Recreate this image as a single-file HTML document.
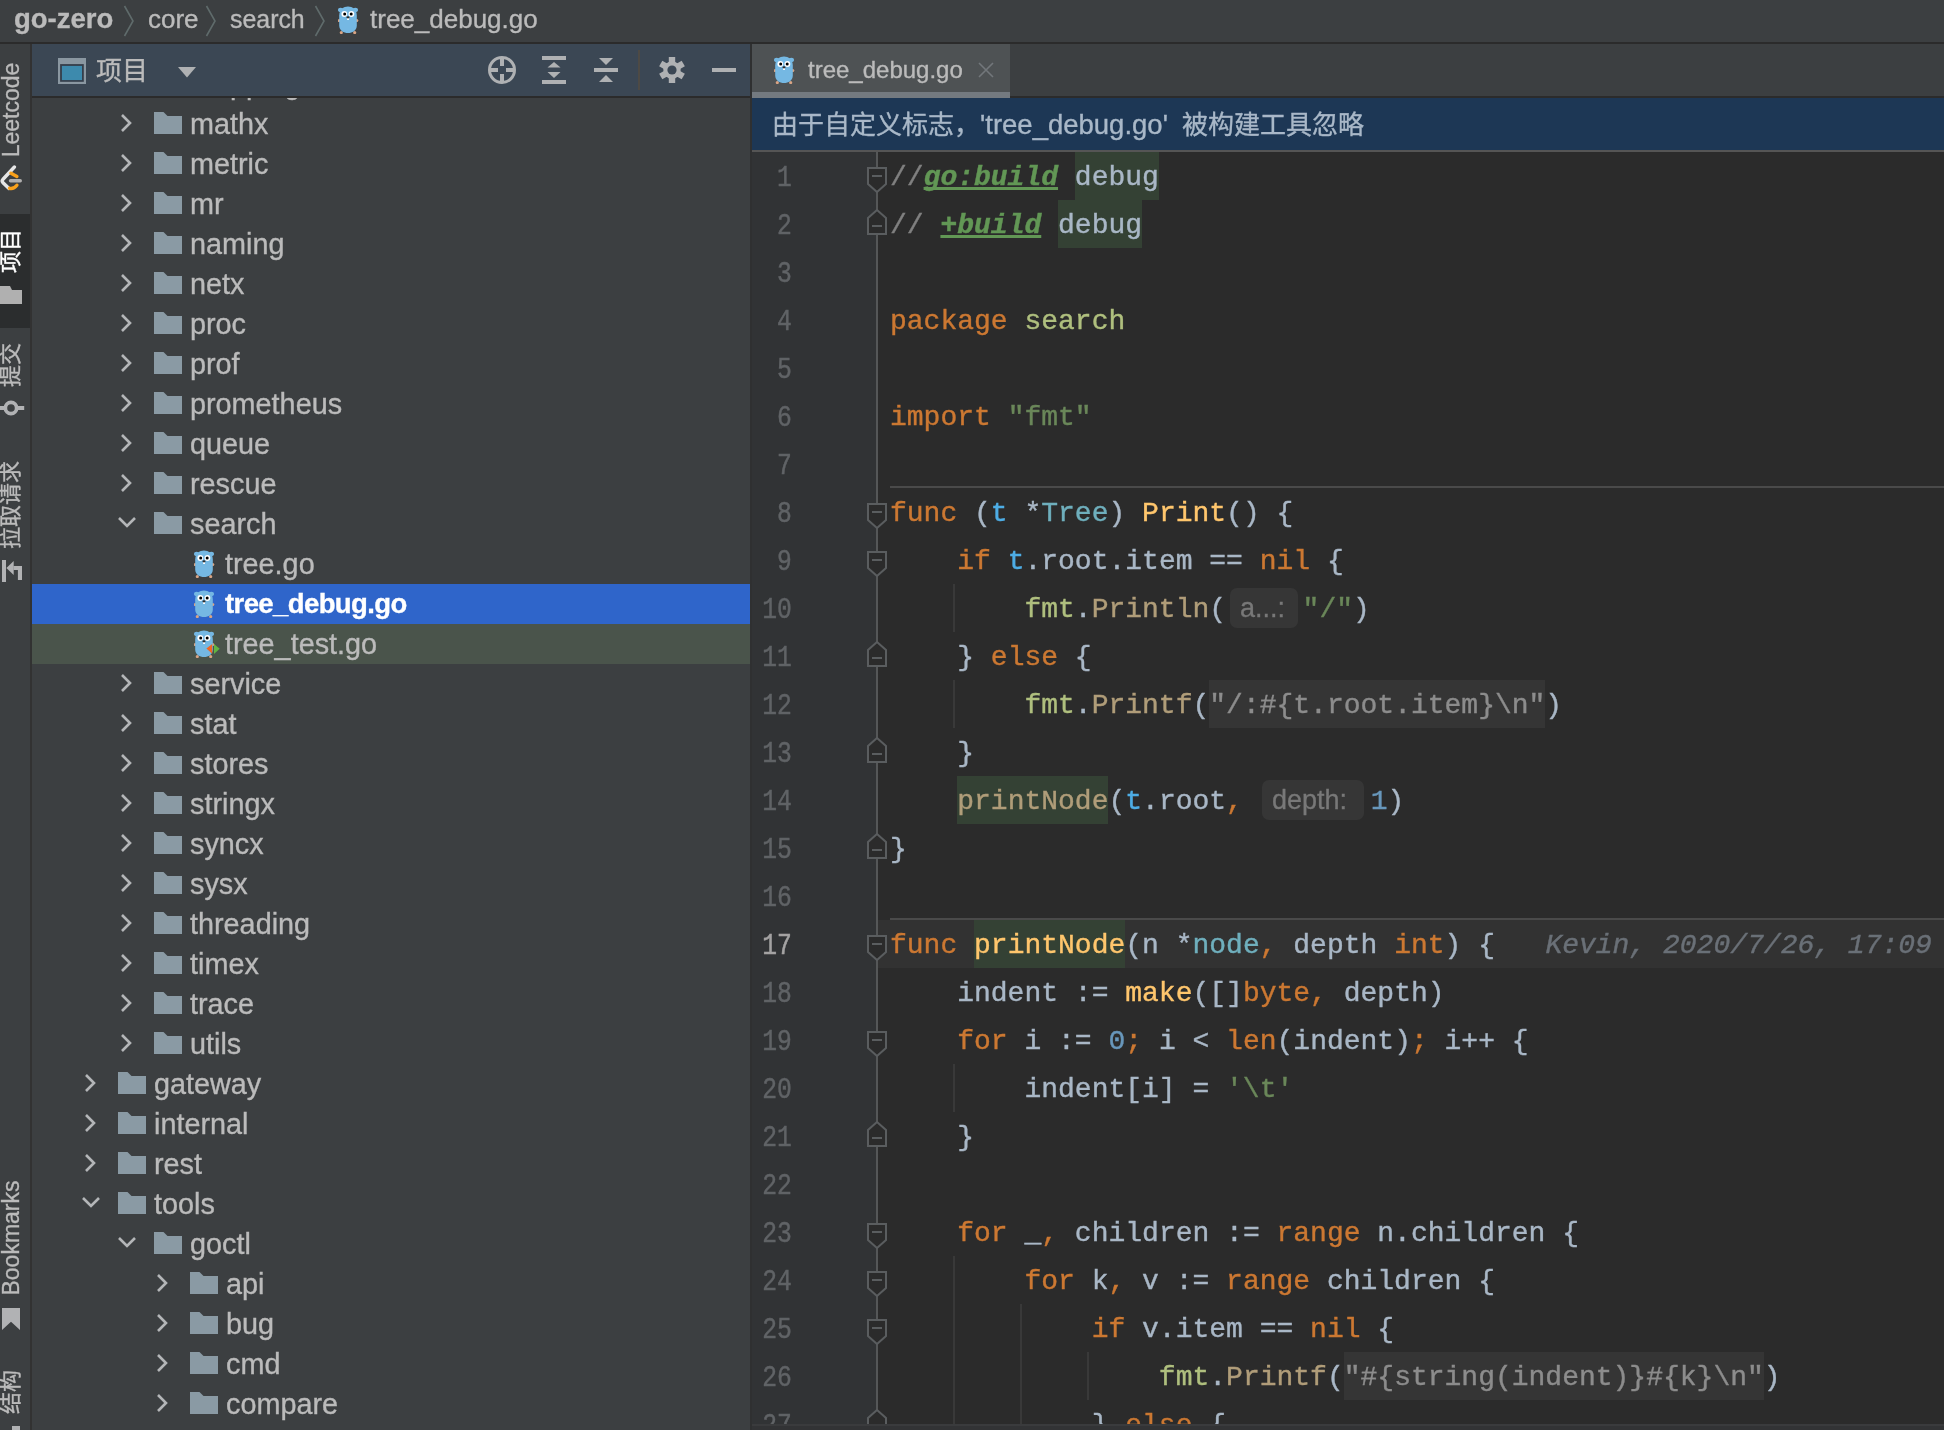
<!DOCTYPE html><html lang="zh-CN"><head><meta charset="utf-8"><style>
*{margin:0;padding:0;box-sizing:border-box}
html,body{width:1944px;height:1430px;overflow:hidden;background:#3C3F41}
#root{position:absolute;left:0;top:0;width:1944px;height:1430px;overflow:hidden;will-change:transform}
body{position:relative;font-family:"Liberation Sans",sans-serif;color:#BBBBBB}
.ic{position:absolute;display:block}
.t{position:absolute;white-space:nowrap}
.bc{position:absolute;left:0;top:0;width:1944px;height:42px;background:#3C3F41;z-index:5}
.bc .t{font-size:26px;line-height:42px;color:#BBBBBB}
.strip{position:absolute;left:0;top:0;width:30px;height:1430px;background:#3C3F41}
.vt{position:absolute;height:30px;line-height:30px;font-size:23px;text-align:center;transform:rotate(-90deg);white-space:nowrap;color:#BBBBBB}
.cjk{font-size:26px}
.vt.cjk{font-size:22px}
.phdr{position:absolute;left:32px;top:44px;width:718px;height:52px;background:#3B4754}
.ptree{position:absolute;left:32px;top:98px;width:718px;height:1332px;background:#3C3F41;overflow:hidden}
.tr{font-size:28.8px;line-height:40px;color:#BBBBBB}
.tabs{position:absolute;left:752px;top:44px;width:1192px;height:52px;background:#3C3F41}
.banner{position:absolute;left:752px;top:98px;width:1192px;height:52px;background:#1D3755;color:#A9B8C8;font-size:26px;line-height:52px;padding-left:20px;padding-top:1px;white-space:nowrap}
.editor{position:absolute;left:752px;top:152px;width:1192px;height:1272px;background:#2B2B2B;overflow:hidden}
.gutter{position:absolute;left:0;top:0;width:125px;height:1272px;background:#313335}
.ln{position:absolute;left:-2px;width:42px;text-align:right;font-family:"Liberation Mono",monospace;font-size:26px;line-height:48px;padding-top:2.5px;transform:scale(0.95,1.15);transform-origin:40px 34px}
.cl{position:absolute;left:138px;height:48px;padding-top:2px;line-height:48px;font-family:"Liberation Mono",monospace;font-size:28px;white-space:pre;color:#A9B7C6}
.tr,.bc .t,.banner,.tabs .t,.vt,.phdr .t{-webkit-text-stroke:0.35px currentColor}
.cl,.ln{-webkit-text-stroke:0.4px currentColor}
.k{color:#CC7832}.s{color:#6A8759}.n{color:#6897BB}.fd{color:#FFC66D}.fc{color:#B09D79}.pk{color:#AFBF7E}
.ty{color:#6FAFBD}.rc{color:#4EADE5}.cm{color:#808080}
.tg{color:#629755;font-weight:bold;font-style:italic;text-decoration:underline;text-underline-offset:2px;text-decoration-thickness:2.5px;text-decoration-skip-ink:none}
.fs{color:#8C8C8C}.bl{color:#6A7077;font-style:italic}
.inl{display:inline-block;height:10px}
.inlb{position:absolute;height:40px;line-height:40px;border-radius:7px;background:#363636;color:#787878;font-family:"Liberation Sans",sans-serif;font-size:27px;text-align:left;-webkit-text-stroke:0.3px currentColor}
</style></head><body><div id="root"><div class="bc"><div class="t b" style="left:14px;top:-2px;font-weight:bold;font-size:27.5px">go-zero</div><svg class="ic" style="left:123px;top:5px" width="12" height="32" viewBox="0 0 12 32"><path d="M1.5 1L10 16L1.5 31" fill="none" stroke="#5F6B6B" stroke-width="1.6"/></svg><div class="t" style="left:148px;top:-2px">core</div><svg class="ic" style="left:205px;top:5px" width="12" height="32" viewBox="0 0 12 32"><path d="M1.5 1L10 16L1.5 31" fill="none" stroke="#5F6B6B" stroke-width="1.6"/></svg><div class="t" style="left:230px;top:-2px;font-size:24.9px">search</div><svg class="ic" style="left:314px;top:5px" width="12" height="32" viewBox="0 0 12 32"><path d="M1.5 1L10 16L1.5 31" fill="none" stroke="#5F6B6B" stroke-width="1.6"/></svg><svg class="ic" style="left:338px;top:6px" width="27" height="28" viewBox="0 0 27 28"><ellipse cx="2.7" cy="3.9" rx="2.7" ry="2.1" fill="#75B8E3"/><ellipse cx="17.3" cy="3.9" rx="2.7" ry="2.1" fill="#75B8E3"/><circle cx="1.2" cy="14.6" r="1.5" fill="#D9A484"/><circle cx="18.8" cy="14.6" r="1.5" fill="#D9A484"/><circle cx="3.3" cy="26.6" r="1.6" fill="#D9A484"/><circle cx="16.7" cy="26.6" r="1.6" fill="#D9A484"/><path d="M1.2 9.5C1.2 -2.5 18.8 -2.5 18.8 9.5V19.5C18.8 29.5 1.2 29.5 1.2 19.5Z" fill="#75B8E3"/><circle cx="6.3" cy="8" r="2.9" fill="#fff"/><circle cx="13.4" cy="8" r="2.9" fill="#fff"/><circle cx="6.7" cy="8" r="1.5" fill="#000"/><circle cx="13.2" cy="8" r="1.5" fill="#000"/><rect x="9.1" y="11.8" width="1.9" height="2.2" fill="#fff"/><ellipse cx="10" cy="11.3" rx="1.6" ry="1.1" fill="#2a2a2a"/></svg><div class="t" style="left:370px;top:-2px">tree_debug.go</div></div><div style="position:absolute;left:0;top:42px;width:1944px;height:2px;background:#2B2B2B;z-index:5"></div><div class="strip"><div class="vt" style="left:-39.0px;top:94.5px;width:100px">Leetcode</div><svg class="ic" style="left:0;top:160px" width="26" height="34" viewBox="0 0 26 34"><path d="M14.4 7L2.8 19.5Q1.5 21 2.8 22.5L9 28.4" fill="none" stroke="#E6E6E6" stroke-width="3.4" stroke-linecap="round"/><path d="M11 13.2L16.9 16.5" fill="none" stroke="#F9A11B" stroke-width="3.4" stroke-linecap="round"/><path d="M9.5 28.3Q13.5 29.5 16.9 25.2" fill="none" stroke="#F9A11B" stroke-width="3.4" stroke-linecap="round"/><path d="M10.5 20.8H20.3" stroke="#B0AFAE" stroke-width="3.4" stroke-linecap="round"/></svg><div style="position:absolute;left:0;top:214px;width:30px;height:114px;background:#2B2D2E"></div><div class="vt cjk" style="left:-19.0px;top:235.9px;width:60px;color:#fff">项目</div><svg class="ic" style="left:0;top:286px" width="22" height="18" viewBox="0 0 22 18"><path d="M0 0H10L12 4H22V18H0Z" fill="#B0B0B0"/></svg><div class="vt cjk" style="left:-19.0px;top:349.5px;width:60px">提交</div><svg class="ic" style="left:0;top:396px" width="26" height="24" viewBox="0 0 26 24"><circle cx="11" cy="12" r="5.65" fill="none" stroke="#B1B2B4" stroke-width="3.7"/><path d="M0 12H4M18 12H24.2" stroke="#B1B2B4" stroke-width="4"/></svg><div class="vt cjk" style="left:-39.0px;top:490.1px;width:100px">拉取请求</div><svg class="ic" style="left:0;top:556px" width="24" height="26" viewBox="0 0 24 26"><rect x="2" y="4" width="4" height="22" fill="#B1B2B4"/><path d="M6.4 12L13.7 5V19Z" fill="#B1B2B4"/><rect x="13.5" y="10" width="8.5" height="4" fill="#B1B2B4"/><rect x="17.9" y="10" width="4.1" height="14" fill="#B1B2B4"/></svg><div class="vt" style="left:-54.0px;top:1223.0px;width:130px">Bookmarks</div><svg class="ic" style="left:0;top:1308px" width="22" height="22" viewBox="0 0 22 22"><path d="M2 0H20V22L11 13.8L2 22Z" fill="#B1B2B4"/></svg><div class="vt cjk" style="left:-19.0px;top:1377.4px;width:60px">结构</div><div style="position:absolute;left:12px;top:1426px;width:8px;height:4px;background:#B1B2B4"></div><div style="position:absolute;left:30px;top:44px;width:2px;height:1386px;background:#323232"></div></div><div class="phdr"><svg class="ic" style="left:26px;top:14px" width="28" height="26" viewBox="0 0 28 26"><rect x="0" y="0" width="28" height="26" fill="#8A97A1"/><rect x="2.1" y="6.1" width="23.7" height="17.7" fill="#353E4A"/><rect x="3.9" y="7.9" width="20.1" height="14.2" fill="#3D8AAD"/></svg><div class="t cjk" style="left:64px;top:1px;line-height:52px;font-size:26px;color:#BBBBBB">项目</div><svg class="ic" style="left:146px;top:23px" width="18" height="11" viewBox="0 0 18 11"><path d="M0 0H18L9 10.5Z" fill="#AFB1B3"/></svg><svg class="ic" style="left:454px;top:10px" width="32" height="32" viewBox="0 0 32 32"><circle cx="16" cy="16" r="12.5" fill="none" stroke="#AFB1B3" stroke-width="3"/><path d="M16 3V12M16 20V29M3 16H12M20 16H29" stroke="#AFB1B3" stroke-width="4"/></svg><svg class="ic" style="left:510px;top:12px" width="24" height="28" viewBox="0 0 24 28"><rect x="0" y="0" width="24" height="4" fill="#AFB1B3"/><rect x="0" y="24" width="24" height="4" fill="#AFB1B3"/><path d="M5.5 11.5H18.5L12 6Z" fill="#AFB1B3"/><path d="M5.5 16H18.5L12 22Z" fill="#AFB1B3"/></svg><svg class="ic" style="left:562px;top:14px" width="24" height="25" viewBox="0 0 24 25"><rect x="0" y="10" width="24" height="4" fill="#AFB1B3"/><path d="M5 0H19L12 7Z" fill="#AFB1B3"/><path d="M5 24H19L12 17Z" fill="#AFB1B3"/></svg><div style="position:absolute;left:606px;top:6px;width:2px;height:40px;background:#4D4A45"></div><svg class="ic" style="left:626px;top:12px" width="28" height="28" viewBox="-14 -14 28 28"><rect x="-3.2" y="-13" width="6.4" height="8" transform="rotate(0)" fill="#AFB1B3"/><rect x="-3.2" y="-13" width="6.4" height="8" transform="rotate(60)" fill="#AFB1B3"/><rect x="-3.2" y="-13" width="6.4" height="8" transform="rotate(120)" fill="#AFB1B3"/><rect x="-3.2" y="-13" width="6.4" height="8" transform="rotate(180)" fill="#AFB1B3"/><rect x="-3.2" y="-13" width="6.4" height="8" transform="rotate(240)" fill="#AFB1B3"/><rect x="-3.2" y="-13" width="6.4" height="8" transform="rotate(300)" fill="#AFB1B3"/><circle r="8.7" fill="#AFB1B3"/><circle r="4.6" fill="#3B4754"/></svg><div style="position:absolute;left:680px;top:24px;width:24px;height:4px;background:#AFB1B3"></div></div><div class="ptree"><svg class="ic" style="left:87px;top:-26px" width="14" height="22" viewBox="0 0 14 22"><path d="M3 3L11 11L3 19" fill="none" stroke="#B4B6B8" stroke-width="2.6"/></svg><svg class="ic" style="left:122px;top:-26px" width="28" height="22" viewBox="0 0 28 22"><path d="M0 0H9.5L13.5 4H28V22H0Z" fill="#8A9AA4"/></svg><div class="t tr" style="left:158px;top:-34px">mapping</div><svg class="ic" style="left:87px;top:14px" width="14" height="22" viewBox="0 0 14 22"><path d="M3 3L11 11L3 19" fill="none" stroke="#B4B6B8" stroke-width="2.6"/></svg><svg class="ic" style="left:122px;top:14px" width="28" height="22" viewBox="0 0 28 22"><path d="M0 0H9.5L13.5 4H28V22H0Z" fill="#8A9AA4"/></svg><div class="t tr" style="left:158px;top:6px">mathx</div><svg class="ic" style="left:87px;top:54px" width="14" height="22" viewBox="0 0 14 22"><path d="M3 3L11 11L3 19" fill="none" stroke="#B4B6B8" stroke-width="2.6"/></svg><svg class="ic" style="left:122px;top:54px" width="28" height="22" viewBox="0 0 28 22"><path d="M0 0H9.5L13.5 4H28V22H0Z" fill="#8A9AA4"/></svg><div class="t tr" style="left:158px;top:46px">metric</div><svg class="ic" style="left:87px;top:94px" width="14" height="22" viewBox="0 0 14 22"><path d="M3 3L11 11L3 19" fill="none" stroke="#B4B6B8" stroke-width="2.6"/></svg><svg class="ic" style="left:122px;top:94px" width="28" height="22" viewBox="0 0 28 22"><path d="M0 0H9.5L13.5 4H28V22H0Z" fill="#8A9AA4"/></svg><div class="t tr" style="left:158px;top:86px">mr</div><svg class="ic" style="left:87px;top:134px" width="14" height="22" viewBox="0 0 14 22"><path d="M3 3L11 11L3 19" fill="none" stroke="#B4B6B8" stroke-width="2.6"/></svg><svg class="ic" style="left:122px;top:134px" width="28" height="22" viewBox="0 0 28 22"><path d="M0 0H9.5L13.5 4H28V22H0Z" fill="#8A9AA4"/></svg><div class="t tr" style="left:158px;top:126px">naming</div><svg class="ic" style="left:87px;top:174px" width="14" height="22" viewBox="0 0 14 22"><path d="M3 3L11 11L3 19" fill="none" stroke="#B4B6B8" stroke-width="2.6"/></svg><svg class="ic" style="left:122px;top:174px" width="28" height="22" viewBox="0 0 28 22"><path d="M0 0H9.5L13.5 4H28V22H0Z" fill="#8A9AA4"/></svg><div class="t tr" style="left:158px;top:166px">netx</div><svg class="ic" style="left:87px;top:214px" width="14" height="22" viewBox="0 0 14 22"><path d="M3 3L11 11L3 19" fill="none" stroke="#B4B6B8" stroke-width="2.6"/></svg><svg class="ic" style="left:122px;top:214px" width="28" height="22" viewBox="0 0 28 22"><path d="M0 0H9.5L13.5 4H28V22H0Z" fill="#8A9AA4"/></svg><div class="t tr" style="left:158px;top:206px">proc</div><svg class="ic" style="left:87px;top:254px" width="14" height="22" viewBox="0 0 14 22"><path d="M3 3L11 11L3 19" fill="none" stroke="#B4B6B8" stroke-width="2.6"/></svg><svg class="ic" style="left:122px;top:254px" width="28" height="22" viewBox="0 0 28 22"><path d="M0 0H9.5L13.5 4H28V22H0Z" fill="#8A9AA4"/></svg><div class="t tr" style="left:158px;top:246px">prof</div><svg class="ic" style="left:87px;top:294px" width="14" height="22" viewBox="0 0 14 22"><path d="M3 3L11 11L3 19" fill="none" stroke="#B4B6B8" stroke-width="2.6"/></svg><svg class="ic" style="left:122px;top:294px" width="28" height="22" viewBox="0 0 28 22"><path d="M0 0H9.5L13.5 4H28V22H0Z" fill="#8A9AA4"/></svg><div class="t tr" style="left:158px;top:286px">prometheus</div><svg class="ic" style="left:87px;top:334px" width="14" height="22" viewBox="0 0 14 22"><path d="M3 3L11 11L3 19" fill="none" stroke="#B4B6B8" stroke-width="2.6"/></svg><svg class="ic" style="left:122px;top:334px" width="28" height="22" viewBox="0 0 28 22"><path d="M0 0H9.5L13.5 4H28V22H0Z" fill="#8A9AA4"/></svg><div class="t tr" style="left:158px;top:326px">queue</div><svg class="ic" style="left:87px;top:374px" width="14" height="22" viewBox="0 0 14 22"><path d="M3 3L11 11L3 19" fill="none" stroke="#B4B6B8" stroke-width="2.6"/></svg><svg class="ic" style="left:122px;top:374px" width="28" height="22" viewBox="0 0 28 22"><path d="M0 0H9.5L13.5 4H28V22H0Z" fill="#8A9AA4"/></svg><div class="t tr" style="left:158px;top:366px">rescue</div><svg class="ic" style="left:84px;top:417px" width="22" height="14" viewBox="0 0 22 14"><path d="M3 3L11 11L19 3" fill="none" stroke="#B4B6B8" stroke-width="2.6"/></svg><svg class="ic" style="left:122px;top:414px" width="28" height="22" viewBox="0 0 28 22"><path d="M0 0H9.5L13.5 4H28V22H0Z" fill="#8A9AA4"/></svg><div class="t tr" style="left:158px;top:406px">search</div><svg class="ic" style="left:162px;top:452px" width="27" height="28" viewBox="0 0 27 28"><ellipse cx="2.7" cy="3.9" rx="2.7" ry="2.1" fill="#75B8E3"/><ellipse cx="17.3" cy="3.9" rx="2.7" ry="2.1" fill="#75B8E3"/><circle cx="1.2" cy="14.6" r="1.5" fill="#D9A484"/><circle cx="18.8" cy="14.6" r="1.5" fill="#D9A484"/><circle cx="3.3" cy="26.6" r="1.6" fill="#D9A484"/><circle cx="16.7" cy="26.6" r="1.6" fill="#D9A484"/><path d="M1.2 9.5C1.2 -2.5 18.8 -2.5 18.8 9.5V19.5C18.8 29.5 1.2 29.5 1.2 19.5Z" fill="#75B8E3"/><circle cx="6.3" cy="8" r="2.9" fill="#fff"/><circle cx="13.4" cy="8" r="2.9" fill="#fff"/><circle cx="6.7" cy="8" r="1.5" fill="#000"/><circle cx="13.2" cy="8" r="1.5" fill="#000"/><rect x="9.1" y="11.8" width="1.9" height="2.2" fill="#fff"/><ellipse cx="10" cy="11.3" rx="1.6" ry="1.1" fill="#2a2a2a"/></svg><div class="t tr" style="left:193px;top:446px">tree.go</div><div style="position:absolute;left:0;top:486px;width:718px;height:40px;background:#2F65CA"></div><svg class="ic" style="left:162px;top:492px" width="27" height="28" viewBox="0 0 27 28"><ellipse cx="2.7" cy="3.9" rx="2.7" ry="2.1" fill="#75B8E3"/><ellipse cx="17.3" cy="3.9" rx="2.7" ry="2.1" fill="#75B8E3"/><circle cx="1.2" cy="14.6" r="1.5" fill="#D9A484"/><circle cx="18.8" cy="14.6" r="1.5" fill="#D9A484"/><circle cx="3.3" cy="26.6" r="1.6" fill="#D9A484"/><circle cx="16.7" cy="26.6" r="1.6" fill="#D9A484"/><path d="M1.2 9.5C1.2 -2.5 18.8 -2.5 18.8 9.5V19.5C18.8 29.5 1.2 29.5 1.2 19.5Z" fill="#75B8E3"/><circle cx="6.3" cy="8" r="2.9" fill="#fff"/><circle cx="13.4" cy="8" r="2.9" fill="#fff"/><circle cx="6.7" cy="8" r="1.5" fill="#000"/><circle cx="13.2" cy="8" r="1.5" fill="#000"/><rect x="9.1" y="11.8" width="1.9" height="2.2" fill="#fff"/><ellipse cx="10" cy="11.3" rx="1.6" ry="1.1" fill="#2a2a2a"/></svg><div class="t tr" style="left:193px;top:486px;color:#FFFFFF;font-weight:bold;font-size:27.5px;letter-spacing:-0.6px">tree_debug.go</div><div style="position:absolute;left:0;top:526px;width:718px;height:40px;background:#4A544B"></div><svg class="ic" style="left:162px;top:532px" width="27" height="28" viewBox="0 0 27 28"><ellipse cx="2.7" cy="3.9" rx="2.7" ry="2.1" fill="#75B8E3"/><ellipse cx="17.3" cy="3.9" rx="2.7" ry="2.1" fill="#75B8E3"/><circle cx="1.2" cy="14.6" r="1.5" fill="#D9A484"/><circle cx="18.8" cy="14.6" r="1.5" fill="#D9A484"/><circle cx="3.3" cy="26.6" r="1.6" fill="#D9A484"/><circle cx="16.7" cy="26.6" r="1.6" fill="#D9A484"/><path d="M1.2 9.5C1.2 -2.5 18.8 -2.5 18.8 9.5V19.5C18.8 29.5 1.2 29.5 1.2 19.5Z" fill="#75B8E3"/><circle cx="6.3" cy="8" r="2.9" fill="#fff"/><circle cx="13.4" cy="8" r="2.9" fill="#fff"/><circle cx="6.7" cy="8" r="1.5" fill="#000"/><circle cx="13.2" cy="8" r="1.5" fill="#000"/><rect x="9.1" y="11.8" width="1.9" height="2.2" fill="#fff"/><ellipse cx="10" cy="11.3" rx="1.6" ry="1.1" fill="#2a2a2a"/><path d="M12.4 18.6L18.2 14.1V23.8Z" fill="#F26522"/><path d="M20 13.9V24L25.7 18.8Z" fill="#62B543"/></svg><div class="t tr" style="left:193px;top:526px">tree_test.go</div><svg class="ic" style="left:87px;top:574px" width="14" height="22" viewBox="0 0 14 22"><path d="M3 3L11 11L3 19" fill="none" stroke="#B4B6B8" stroke-width="2.6"/></svg><svg class="ic" style="left:122px;top:574px" width="28" height="22" viewBox="0 0 28 22"><path d="M0 0H9.5L13.5 4H28V22H0Z" fill="#8A9AA4"/></svg><div class="t tr" style="left:158px;top:566px">service</div><svg class="ic" style="left:87px;top:614px" width="14" height="22" viewBox="0 0 14 22"><path d="M3 3L11 11L3 19" fill="none" stroke="#B4B6B8" stroke-width="2.6"/></svg><svg class="ic" style="left:122px;top:614px" width="28" height="22" viewBox="0 0 28 22"><path d="M0 0H9.5L13.5 4H28V22H0Z" fill="#8A9AA4"/></svg><div class="t tr" style="left:158px;top:606px">stat</div><svg class="ic" style="left:87px;top:654px" width="14" height="22" viewBox="0 0 14 22"><path d="M3 3L11 11L3 19" fill="none" stroke="#B4B6B8" stroke-width="2.6"/></svg><svg class="ic" style="left:122px;top:654px" width="28" height="22" viewBox="0 0 28 22"><path d="M0 0H9.5L13.5 4H28V22H0Z" fill="#8A9AA4"/></svg><div class="t tr" style="left:158px;top:646px">stores</div><svg class="ic" style="left:87px;top:694px" width="14" height="22" viewBox="0 0 14 22"><path d="M3 3L11 11L3 19" fill="none" stroke="#B4B6B8" stroke-width="2.6"/></svg><svg class="ic" style="left:122px;top:694px" width="28" height="22" viewBox="0 0 28 22"><path d="M0 0H9.5L13.5 4H28V22H0Z" fill="#8A9AA4"/></svg><div class="t tr" style="left:158px;top:686px">stringx</div><svg class="ic" style="left:87px;top:734px" width="14" height="22" viewBox="0 0 14 22"><path d="M3 3L11 11L3 19" fill="none" stroke="#B4B6B8" stroke-width="2.6"/></svg><svg class="ic" style="left:122px;top:734px" width="28" height="22" viewBox="0 0 28 22"><path d="M0 0H9.5L13.5 4H28V22H0Z" fill="#8A9AA4"/></svg><div class="t tr" style="left:158px;top:726px">syncx</div><svg class="ic" style="left:87px;top:774px" width="14" height="22" viewBox="0 0 14 22"><path d="M3 3L11 11L3 19" fill="none" stroke="#B4B6B8" stroke-width="2.6"/></svg><svg class="ic" style="left:122px;top:774px" width="28" height="22" viewBox="0 0 28 22"><path d="M0 0H9.5L13.5 4H28V22H0Z" fill="#8A9AA4"/></svg><div class="t tr" style="left:158px;top:766px">sysx</div><svg class="ic" style="left:87px;top:814px" width="14" height="22" viewBox="0 0 14 22"><path d="M3 3L11 11L3 19" fill="none" stroke="#B4B6B8" stroke-width="2.6"/></svg><svg class="ic" style="left:122px;top:814px" width="28" height="22" viewBox="0 0 28 22"><path d="M0 0H9.5L13.5 4H28V22H0Z" fill="#8A9AA4"/></svg><div class="t tr" style="left:158px;top:806px">threading</div><svg class="ic" style="left:87px;top:854px" width="14" height="22" viewBox="0 0 14 22"><path d="M3 3L11 11L3 19" fill="none" stroke="#B4B6B8" stroke-width="2.6"/></svg><svg class="ic" style="left:122px;top:854px" width="28" height="22" viewBox="0 0 28 22"><path d="M0 0H9.5L13.5 4H28V22H0Z" fill="#8A9AA4"/></svg><div class="t tr" style="left:158px;top:846px">timex</div><svg class="ic" style="left:87px;top:894px" width="14" height="22" viewBox="0 0 14 22"><path d="M3 3L11 11L3 19" fill="none" stroke="#B4B6B8" stroke-width="2.6"/></svg><svg class="ic" style="left:122px;top:894px" width="28" height="22" viewBox="0 0 28 22"><path d="M0 0H9.5L13.5 4H28V22H0Z" fill="#8A9AA4"/></svg><div class="t tr" style="left:158px;top:886px">trace</div><svg class="ic" style="left:87px;top:934px" width="14" height="22" viewBox="0 0 14 22"><path d="M3 3L11 11L3 19" fill="none" stroke="#B4B6B8" stroke-width="2.6"/></svg><svg class="ic" style="left:122px;top:934px" width="28" height="22" viewBox="0 0 28 22"><path d="M0 0H9.5L13.5 4H28V22H0Z" fill="#8A9AA4"/></svg><div class="t tr" style="left:158px;top:926px">utils</div><svg class="ic" style="left:51px;top:974px" width="14" height="22" viewBox="0 0 14 22"><path d="M3 3L11 11L3 19" fill="none" stroke="#B4B6B8" stroke-width="2.6"/></svg><svg class="ic" style="left:86px;top:974px" width="28" height="22" viewBox="0 0 28 22"><path d="M0 0H9.5L13.5 4H28V22H0Z" fill="#8A9AA4"/></svg><div class="t tr" style="left:122px;top:966px">gateway</div><svg class="ic" style="left:51px;top:1014px" width="14" height="22" viewBox="0 0 14 22"><path d="M3 3L11 11L3 19" fill="none" stroke="#B4B6B8" stroke-width="2.6"/></svg><svg class="ic" style="left:86px;top:1014px" width="28" height="22" viewBox="0 0 28 22"><path d="M0 0H9.5L13.5 4H28V22H0Z" fill="#8A9AA4"/></svg><div class="t tr" style="left:122px;top:1006px">internal</div><svg class="ic" style="left:51px;top:1054px" width="14" height="22" viewBox="0 0 14 22"><path d="M3 3L11 11L3 19" fill="none" stroke="#B4B6B8" stroke-width="2.6"/></svg><svg class="ic" style="left:86px;top:1054px" width="28" height="22" viewBox="0 0 28 22"><path d="M0 0H9.5L13.5 4H28V22H0Z" fill="#8A9AA4"/></svg><div class="t tr" style="left:122px;top:1046px">rest</div><svg class="ic" style="left:48px;top:1097px" width="22" height="14" viewBox="0 0 22 14"><path d="M3 3L11 11L19 3" fill="none" stroke="#B4B6B8" stroke-width="2.6"/></svg><svg class="ic" style="left:86px;top:1094px" width="28" height="22" viewBox="0 0 28 22"><path d="M0 0H9.5L13.5 4H28V22H0Z" fill="#8A9AA4"/></svg><div class="t tr" style="left:122px;top:1086px">tools</div><svg class="ic" style="left:84px;top:1137px" width="22" height="14" viewBox="0 0 22 14"><path d="M3 3L11 11L19 3" fill="none" stroke="#B4B6B8" stroke-width="2.6"/></svg><svg class="ic" style="left:122px;top:1134px" width="28" height="22" viewBox="0 0 28 22"><path d="M0 0H9.5L13.5 4H28V22H0Z" fill="#8A9AA4"/></svg><div class="t tr" style="left:158px;top:1126px">goctl</div><svg class="ic" style="left:123px;top:1174px" width="14" height="22" viewBox="0 0 14 22"><path d="M3 3L11 11L3 19" fill="none" stroke="#B4B6B8" stroke-width="2.6"/></svg><svg class="ic" style="left:158px;top:1174px" width="28" height="22" viewBox="0 0 28 22"><path d="M0 0H9.5L13.5 4H28V22H0Z" fill="#8A9AA4"/></svg><div class="t tr" style="left:194px;top:1166px">api</div><svg class="ic" style="left:123px;top:1214px" width="14" height="22" viewBox="0 0 14 22"><path d="M3 3L11 11L3 19" fill="none" stroke="#B4B6B8" stroke-width="2.6"/></svg><svg class="ic" style="left:158px;top:1214px" width="28" height="22" viewBox="0 0 28 22"><path d="M0 0H9.5L13.5 4H28V22H0Z" fill="#8A9AA4"/></svg><div class="t tr" style="left:194px;top:1206px">bug</div><svg class="ic" style="left:123px;top:1254px" width="14" height="22" viewBox="0 0 14 22"><path d="M3 3L11 11L3 19" fill="none" stroke="#B4B6B8" stroke-width="2.6"/></svg><svg class="ic" style="left:158px;top:1254px" width="28" height="22" viewBox="0 0 28 22"><path d="M0 0H9.5L13.5 4H28V22H0Z" fill="#8A9AA4"/></svg><div class="t tr" style="left:194px;top:1246px">cmd</div><svg class="ic" style="left:123px;top:1294px" width="14" height="22" viewBox="0 0 14 22"><path d="M3 3L11 11L3 19" fill="none" stroke="#B4B6B8" stroke-width="2.6"/></svg><svg class="ic" style="left:158px;top:1294px" width="28" height="22" viewBox="0 0 28 22"><path d="M0 0H9.5L13.5 4H28V22H0Z" fill="#8A9AA4"/></svg><div class="t tr" style="left:194px;top:1286px">compare</div></div><div class="tabs"><div style="position:absolute;left:0;top:0;width:258px;height:48px;background:#4E5254"></div><div style="position:absolute;left:0;top:48px;width:258px;height:6px;background:#747A80"></div><svg class="ic" style="left:22px;top:12px" width="27" height="28" viewBox="0 0 27 28"><ellipse cx="2.7" cy="3.9" rx="2.7" ry="2.1" fill="#75B8E3"/><ellipse cx="17.3" cy="3.9" rx="2.7" ry="2.1" fill="#75B8E3"/><circle cx="1.2" cy="14.6" r="1.5" fill="#D9A484"/><circle cx="18.8" cy="14.6" r="1.5" fill="#D9A484"/><circle cx="3.3" cy="26.6" r="1.6" fill="#D9A484"/><circle cx="16.7" cy="26.6" r="1.6" fill="#D9A484"/><path d="M1.2 9.5C1.2 -2.5 18.8 -2.5 18.8 9.5V19.5C18.8 29.5 1.2 29.5 1.2 19.5Z" fill="#75B8E3"/><circle cx="6.3" cy="8" r="2.9" fill="#fff"/><circle cx="13.4" cy="8" r="2.9" fill="#fff"/><circle cx="6.7" cy="8" r="1.5" fill="#000"/><circle cx="13.2" cy="8" r="1.5" fill="#000"/><rect x="9.1" y="11.8" width="1.9" height="2.2" fill="#fff"/><ellipse cx="10" cy="11.3" rx="1.6" ry="1.1" fill="#2a2a2a"/></svg><div class="t" style="left:56px;top:2px;line-height:48px;font-size:24px;color:#BBBBBB">tree_debug.go</div><svg class="ic" style="left:226px;top:18px" width="16" height="16" viewBox="0 0 16 16"><path d="M1 1L15 15M15 1L1 15" stroke="#72777B" stroke-width="1.6"/></svg></div><div style="position:absolute;left:32px;top:96px;width:718px;height:2px;background:#2B2B2B"></div><div style="position:absolute;left:750px;top:44px;width:2px;height:1386px;background:#2F3031"></div><div style="position:absolute;left:1010px;top:96px;width:934px;height:2px;background:#2B2B2B"></div><div style="position:absolute;left:752px;top:150px;width:1192px;height:2px;background:#555555"></div><div class="banner"><span class="cjk">由于自定义标志，</span><span style="font-size:27.5px">'tree_debug.go' </span><span class="cjk" style="margin-left:6px">被构建工具忽略</span></div><div class="editor"><div class="gutter"></div><div style="position:absolute;left:125px;top:768px;width:1067px;height:48px;background:#323232"></div><div style="position:absolute;left:138px;top:334px;width:1100px;height:2px;background:#4A4A4A"></div><div style="position:absolute;left:138px;top:766px;width:1100px;height:2px;background:#4A4A4A"></div><div style="position:absolute;left:322.8px;top:0px;width:84.0px;height:48px;background:#344134"></div><div style="position:absolute;left:306.0px;top:48px;width:84.0px;height:48px;background:#344134"></div><div style="position:absolute;left:205.2px;top:624px;width:151.2px;height:48px;background:#344134"></div><div style="position:absolute;left:222.0px;top:768px;width:151.2px;height:48px;background:#344134"></div><div style="position:absolute;left:457.2px;top:528px;width:336.0px;height:48px;background:#353535"></div><div style="position:absolute;left:591.6px;top:1200px;width:420.0px;height:48px;background:#353535"></div><div style="position:absolute;left:201px;top:432px;width:2px;height:48px;background:#393939"></div><div style="position:absolute;left:201px;top:528px;width:2px;height:48px;background:#393939"></div><div style="position:absolute;left:201px;top:912px;width:2px;height:48px;background:#393939"></div><div style="position:absolute;left:201px;top:1104px;width:2px;height:240px;background:#393939"></div><div style="position:absolute;left:268px;top:1152px;width:2px;height:192px;background:#393939"></div><div style="position:absolute;left:335px;top:1200px;width:2px;height:48px;background:#393939"></div><div style="position:absolute;left:124px;top:0;width:2px;height:1272px;background:#555758"></div><svg class="ic" style="left:115px;top:15px" width="20" height="26" viewBox="0 0 20 26"><path d="M1 1H19V17L10 25L1 17Z" fill="#2B2B2B" stroke="#5A5D5F" stroke-width="2"/><path d="M5 9H15" stroke="#5A5D5F" stroke-width="2"/></svg><svg class="ic" style="left:115px;top:57px" width="20" height="26" viewBox="0 0 20 26"><path d="M1 25H19V9L10 1L1 9Z" fill="#2B2B2B" stroke="#5A5D5F" stroke-width="2"/><path d="M5 17H15" stroke="#5A5D5F" stroke-width="2"/></svg><svg class="ic" style="left:115px;top:351px" width="20" height="26" viewBox="0 0 20 26"><path d="M1 1H19V17L10 25L1 17Z" fill="#2B2B2B" stroke="#5A5D5F" stroke-width="2"/><path d="M5 9H15" stroke="#5A5D5F" stroke-width="2"/></svg><svg class="ic" style="left:115px;top:399px" width="20" height="26" viewBox="0 0 20 26"><path d="M1 1H19V17L10 25L1 17Z" fill="#2B2B2B" stroke="#5A5D5F" stroke-width="2"/><path d="M5 9H15" stroke="#5A5D5F" stroke-width="2"/></svg><svg class="ic" style="left:115px;top:489px" width="20" height="26" viewBox="0 0 20 26"><path d="M1 25H19V9L10 1L1 9Z" fill="#2B2B2B" stroke="#5A5D5F" stroke-width="2"/><path d="M5 17H15" stroke="#5A5D5F" stroke-width="2"/></svg><svg class="ic" style="left:115px;top:585px" width="20" height="26" viewBox="0 0 20 26"><path d="M1 25H19V9L10 1L1 9Z" fill="#2B2B2B" stroke="#5A5D5F" stroke-width="2"/><path d="M5 17H15" stroke="#5A5D5F" stroke-width="2"/></svg><svg class="ic" style="left:115px;top:681px" width="20" height="26" viewBox="0 0 20 26"><path d="M1 25H19V9L10 1L1 9Z" fill="#2B2B2B" stroke="#5A5D5F" stroke-width="2"/><path d="M5 17H15" stroke="#5A5D5F" stroke-width="2"/></svg><svg class="ic" style="left:115px;top:783px" width="20" height="26" viewBox="0 0 20 26"><path d="M1 1H19V17L10 25L1 17Z" fill="#2B2B2B" stroke="#5A5D5F" stroke-width="2"/><path d="M5 9H15" stroke="#5A5D5F" stroke-width="2"/></svg><svg class="ic" style="left:115px;top:879px" width="20" height="26" viewBox="0 0 20 26"><path d="M1 1H19V17L10 25L1 17Z" fill="#2B2B2B" stroke="#5A5D5F" stroke-width="2"/><path d="M5 9H15" stroke="#5A5D5F" stroke-width="2"/></svg><svg class="ic" style="left:115px;top:969px" width="20" height="26" viewBox="0 0 20 26"><path d="M1 25H19V9L10 1L1 9Z" fill="#2B2B2B" stroke="#5A5D5F" stroke-width="2"/><path d="M5 17H15" stroke="#5A5D5F" stroke-width="2"/></svg><svg class="ic" style="left:115px;top:1071px" width="20" height="26" viewBox="0 0 20 26"><path d="M1 1H19V17L10 25L1 17Z" fill="#2B2B2B" stroke="#5A5D5F" stroke-width="2"/><path d="M5 9H15" stroke="#5A5D5F" stroke-width="2"/></svg><svg class="ic" style="left:115px;top:1119px" width="20" height="26" viewBox="0 0 20 26"><path d="M1 1H19V17L10 25L1 17Z" fill="#2B2B2B" stroke="#5A5D5F" stroke-width="2"/><path d="M5 9H15" stroke="#5A5D5F" stroke-width="2"/></svg><svg class="ic" style="left:115px;top:1167px" width="20" height="26" viewBox="0 0 20 26"><path d="M1 1H19V17L10 25L1 17Z" fill="#2B2B2B" stroke="#5A5D5F" stroke-width="2"/><path d="M5 9H15" stroke="#5A5D5F" stroke-width="2"/></svg><svg class="ic" style="left:115px;top:1257px" width="20" height="26" viewBox="0 0 20 26"><path d="M1 25H19V9L10 1L1 9Z" fill="#2B2B2B" stroke="#5A5D5F" stroke-width="2"/><path d="M5 17H15" stroke="#5A5D5F" stroke-width="2"/></svg><div class="ln" style="top:0px;color:#606366">1</div><div class="ln" style="top:48px;color:#606366">2</div><div class="ln" style="top:96px;color:#606366">3</div><div class="ln" style="top:144px;color:#606366">4</div><div class="ln" style="top:192px;color:#606366">5</div><div class="ln" style="top:240px;color:#606366">6</div><div class="ln" style="top:288px;color:#606366">7</div><div class="ln" style="top:336px;color:#606366">8</div><div class="ln" style="top:384px;color:#606366">9</div><div class="ln" style="top:432px;color:#606366">10</div><div class="ln" style="top:480px;color:#606366">11</div><div class="ln" style="top:528px;color:#606366">12</div><div class="ln" style="top:576px;color:#606366">13</div><div class="ln" style="top:624px;color:#606366">14</div><div class="ln" style="top:672px;color:#606366">15</div><div class="ln" style="top:720px;color:#606366">16</div><div class="ln" style="top:768px;color:#A4A3A3">17</div><div class="ln" style="top:816px;color:#606366">18</div><div class="ln" style="top:864px;color:#606366">19</div><div class="ln" style="top:912px;color:#606366">20</div><div class="ln" style="top:960px;color:#606366">21</div><div class="ln" style="top:1008px;color:#606366">22</div><div class="ln" style="top:1056px;color:#606366">23</div><div class="ln" style="top:1104px;color:#606366">24</div><div class="ln" style="top:1152px;color:#606366">25</div><div class="ln" style="top:1200px;color:#606366">26</div><div class="ln" style="top:1248px;color:#606366">27</div><div class="cl" style="top:0px"><span class="cm">//</span><span class="tg">go:build</span> debug</div><div class="cl" style="top:48px"><span class="cm">// </span><span class="tg">+build</span> debug</div><div class="cl" style="top:144px"><span class="k">package</span> <span class="pk">search</span></div><div class="cl" style="top:240px"><span class="k">import</span> <span class="s">"fmt"</span></div><div class="cl" style="top:336px"><span class="k">func</span> (<span class="rc">t</span> *<span class="ty">Tree</span>) <span class="fd">Print</span>() {</div><div class="cl" style="top:384px">    <span class="k">if</span> <span class="rc">t</span>.root.item == <span class="k">nil</span> {</div><div class="cl" style="top:432px">        <span class="pk">fmt</span>.<span class="fc">Println</span>(<span class="inl" style="width:76.5px"></span><span class="s">"/"</span>)</div><div class="cl" style="top:480px">    } <span class="k">else</span> {</div><div class="cl" style="top:528px">        <span class="pk">fmt</span>.<span class="fc">Printf</span>(<span class="fs">"/:#{t.root.item}\n"</span>)</div><div class="cl" style="top:576px">    }</div><div class="cl" style="top:624px">    <span class="fc">printNode</span>(<span class="rc">t</span>.root<span class="k">,</span> <span class="inl" style="width:111px"></span><span class="n">1</span>)</div><div class="cl" style="top:672px">}</div><div class="cl" style="top:768px"><span class="k">func</span> <span class="fd">printNode</span>(n *<span class="ty">node</span><span class="k">,</span> depth <span class="k">int</span>) {   <span class="bl">Kevin, 2020/7/26, 17:09</span></div><div class="cl" style="top:816px">    indent := <span class="fd">make</span>([]<span class="k">byte</span><span class="k">,</span> depth)</div><div class="cl" style="top:864px">    <span class="k">for</span> i := <span class="n">0</span><span class="k">;</span> i &lt; <span class="k">len</span>(indent)<span class="k">;</span> i++ {</div><div class="cl" style="top:912px">        indent[i] = <span class="s">'\t'</span></div><div class="cl" style="top:960px">    }</div><div class="cl" style="top:1056px">    <span class="k">for</span> _<span class="k">,</span> children := <span class="k">range</span> n.children {</div><div class="cl" style="top:1104px">        <span class="k">for</span> k<span class="k">,</span> v := <span class="k">range</span> children {</div><div class="cl" style="top:1152px">            <span class="k">if</span> v.item == <span class="k">nil</span> {</div><div class="cl" style="top:1200px">                <span class="pk">fmt</span>.<span class="fc">Printf</span>(<span class="fs">"#{string(indent)}#{k}\n"</span>)</div><div class="cl" style="top:1248px">            } <span class="k">else</span> {</div><div class="inlb" style="left:478px;top:436px;width:68px;padding-left:10px">a...:</div><div class="inlb" style="left:510px;top:628px;width:102px;padding-left:10px">depth:</div></div><div style="position:absolute;left:752px;top:1424px;width:1192px;height:2px;background:#3A3B3D"></div><div style="position:absolute;left:752px;top:1426px;width:1192px;height:4px;background:#323335"></div></div></body></html>
